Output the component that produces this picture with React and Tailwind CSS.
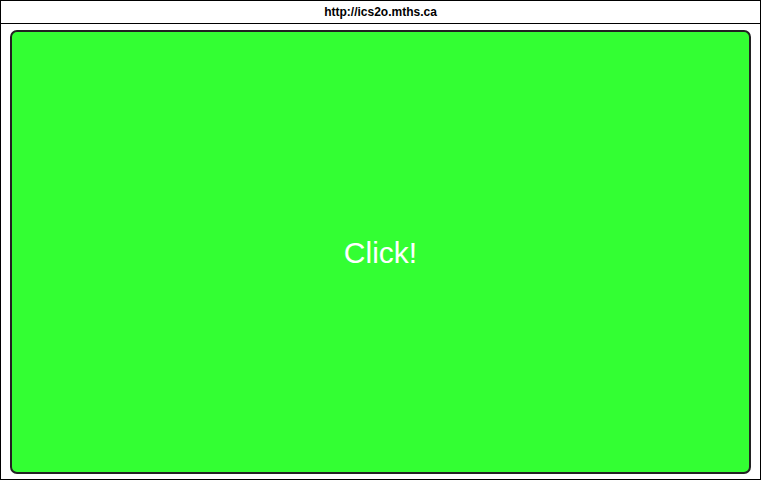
import React from 'react';

export default function App() {
    return (
        <div className="w-[761px] h-[480px] border border-black flex flex-col bg-white" style={{ fontFamily: '"Liberation Sans", Arial, sans-serif' }}>
            <div className="h-[23px] border-b border-black flex items-center justify-center text-[12px] font-bold text-black">
                http://ics2o.mths.ca
            </div>
            <div className="flex-1 pt-[6px] pl-[9px] pr-[9px] pb-[5px] flex">
                <button className="flex-1 rounded-[7px] border-2 border-[#222] bg-[#33ff33] text-white text-[30px] flex items-center justify-center cursor-pointer">
                    Click!
                </button>
            </div>
        </div>
    );
}
